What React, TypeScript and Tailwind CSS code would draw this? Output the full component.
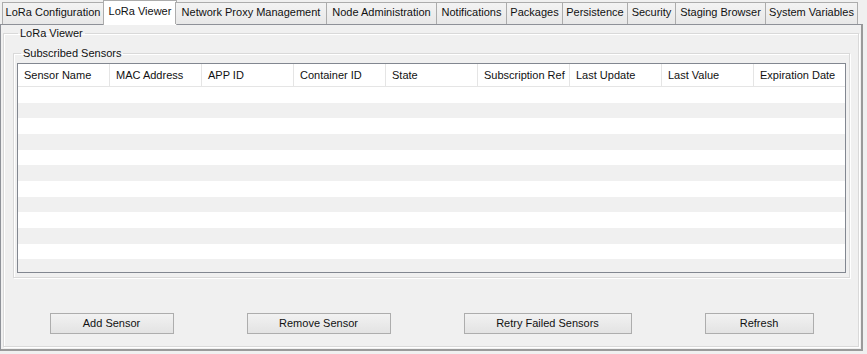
import React from "react";

const tabs: { label: string; w: number; selected?: boolean }[] = [
  { label: "LoRa Configuration", w: 102 },
  { label: "LoRa Viewer", w: 74, selected: true },
  { label: "Network Proxy Management", w: 152 },
  { label: "Node Administration", w: 111 },
  { label: "Notifications", w: 71 },
  { label: "Packages", w: 57 },
  { label: "Persistence", w: 66 },
  { label: "Security", w: 49 },
  { label: "Staging Browser", w: 91 },
  { label: "System Variables", w: 93 },
];

const columns = [
  "Sensor Name",
  "MAC Address",
  "APP ID",
  "Container ID",
  "State",
  "Subscription Ref",
  "Last Update",
  "Last Value",
  "Expiration Date",
];

const rowHeights = [16, 15, 16, 16, 15, 16, 16, 15, 16, 16, 15, 16, 16];

function Btn({ label, w }: { label: string; w: number }) {
  return (
    <div
      className="h-[21px] flex items-center justify-center border border-[#adadad] bg-gradient-to-b from-[#f2f2f2] to-[#e3e3e3] text-[#111]"
      style={{ width: w }}
    >
      {label}
    </div>
  );
}

export default function App() {
  return (
    <div
      className="w-[867px] h-[354px] bg-[#f0f0f0] text-[11px] leading-[13px] text-[#111] overflow-hidden"
      style={{ fontFamily: '"Liberation Sans", Arial, sans-serif' }}
    >
      {/* Tab strip */}
      <div className="relative z-10 flex items-end h-[24px] pl-[2px]">
        {tabs.map((t, i) =>
          t.selected ? (
            <div
              key={t.label}
              className="h-[25px] -mb-px -mr-px flex items-center justify-center bg-white border border-b-0 border-[#acacac] pb-[4px]"
              style={{ width: t.w, marginLeft: i === 0 ? 0 : -1 }}
            >
              {t.label}
            </div>
          ) : (
            <div
              key={t.label}
              className="h-[22px] flex items-center justify-center border border-b-0 border-[#acacac] bg-gradient-to-b from-[#f3f3f3] to-[#e8e8e8] pb-[3px]"
              style={{ width: t.w, marginLeft: i === 0 ? 0 : -1 }}
            >
              {t.label}
            </div>
          )
        )}
      </div>

      {/* Panel */}
      <div className="w-[863px] h-[327px] border border-[#8e9198] border-r-2 border-b-2 border-r-[#9a9a9a] border-b-[#9a9a9a] pl-[2px] pr-[2px] pt-[2px] bg-[#f0f0f0]">
        <fieldset className="h-[320px] border border-[#d9d9d9] shadow-[inset_1px_1px_0_#ffffff,1px_1px_0_#ffffff] pl-[9px] pr-[8px]">
          <legend className="ml-[5px] px-[2px] leading-[13px]">LoRa Viewer</legend>
          <fieldset className="mt-[7px] h-[231px] border border-[#d9d9d9] shadow-[inset_1px_1px_0_#ffffff,1px_1px_0_#ffffff] pl-[3px] pr-[3px] pt-[3px]">
            <legend className="ml-[4px] px-[2px] leading-[13px]">Subscribed Sensors</legend>
            <div className="h-[210px] border border-[#828790] bg-white overflow-hidden flex flex-col">
              <div className="h-[23px] flex shrink-0 border-b border-[#e5e5e5] bg-white">
                {columns.map((c, i) => (
                  <div
                    key={c}
                    className={`flex-1 flex items-center pl-[6px] ${i < columns.length - 1 ? "border-r border-[#e5e5e5]" : ""}`}
                  >
                    {c}
                  </div>
                ))}
              </div>
              {rowHeights.map((h, i) => (
                <div
                  key={i}
                  className={`shrink-0 ${i % 2 === 1 ? "bg-[#f0f0f0]" : "bg-white"}`}
                  style={{ height: h }}
                />
              ))}
            </div>
          </fieldset>
          <div className="mt-[35px] flex justify-center gap-[73px]">
            <Btn label="Add Sensor" w={124} />
            <Btn label="Remove Sensor" w={144} />
            <Btn label="Retry Failed Sensors" w={168} />
            <Btn label="Refresh" w={109} />
          </div>
        </fieldset>
      </div>
    </div>
  );
}
